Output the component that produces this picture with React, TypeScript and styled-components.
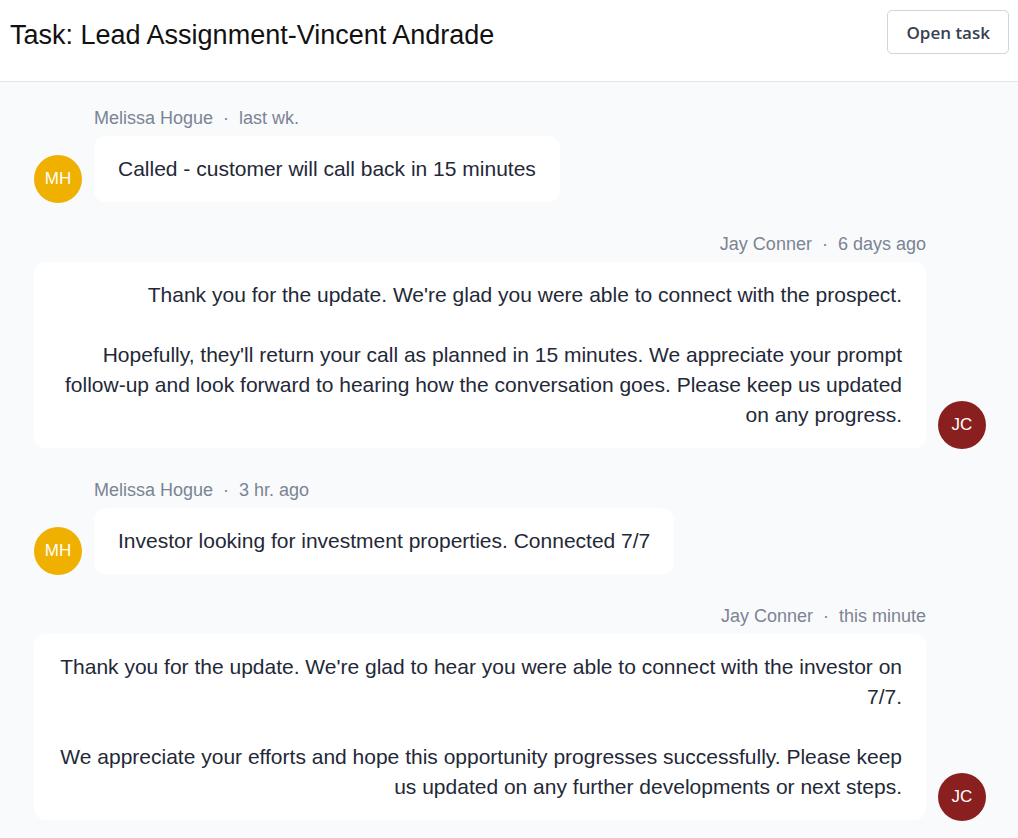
import React from "react";
import styled, { createGlobalStyle } from "styled-components";

const GlobalStyle = createGlobalStyle`
  html, body {
    margin: 0;
    padding: 0;
    background: #f9fafb;
  }
  body {
    font-family: "Liberation Sans", Arial, sans-serif;
  }
  * { box-sizing: border-box; }
`;

const Page = styled.div`
  width: 1018px;
  min-height: 838px;
  background: #f9fafb;
`;

const Header = styled.header`
  display: flex;
  align-items: flex-start;
  justify-content: space-between;
  height: 82px;
  padding: 10px 9px 0 10px;
  background: #ffffff;
  border-bottom: 1px solid #e5e7eb;
`;

const Title = styled.h1`
  margin: 10px 0 0;
  font-family: "Liberation Sans", Arial, sans-serif;
  font-size: 27px;
  line-height: 31px;
  font-weight: 400;
  color: #111111;
`;

const OpenButton = styled.button`
  height: 44px;
  padding: 0 18px;
  background: #ffffff;
  border: 1px solid #d1d5db;
  border-radius: 5px;
  font-family: "Open Sans", sans-serif;
  font-size: 17px;
  font-weight: 600;
  color: #374151;
  cursor: pointer;
`;

const Thread = styled.main`
  display: flex;
  flex-direction: column;
  gap: 30px;
  padding: 24px 32px 24px 34px;
`;

const Message = styled.section<{ $mine: boolean }>`
  display: flex;
  flex-direction: column;
  align-items: ${(p) => (p.$mine ? "flex-end" : "flex-start")};
  gap: 6px;
`;

const Meta = styled.div<{ $mine: boolean }>`
  font-size: 18px;
  line-height: 24px;
  color: #7b8494;
  margin-left: ${(p) => (p.$mine ? "0" : "60px")};
  margin-right: ${(p) => (p.$mine ? "60px" : "0")};
`;

const Dot = styled.span`
  margin: 0 10px;
`;

const Row = styled.div<{ $mine: boolean }>`
  display: flex;
  flex-direction: ${(p) => (p.$mine ? "row-reverse" : "row")};
  align-items: flex-end;
  gap: 12px;
  width: 100%;
  justify-content: flex-start;
`;

const Avatar = styled.div<{ $color: string }>`
  flex: 0 0 48px;
  width: 48px;
  height: 48px;
  border-radius: 50%;
  background: ${(p) => p.$color};
  color: #ffffff;
  display: flex;
  align-items: center;
  justify-content: center;
  font-size: 17px;
  margin-bottom: -1px;
`;

const Bubble = styled.div<{ $mine: boolean }>`
  flex: 0 1 auto;
  background: #ffffff;
  border-radius: 12px;
  padding: 18px 24px;
  font-size: 21px;
  line-height: 30px;
  color: #1f2937;
  text-align: ${(p) => (p.$mine ? "right" : "left")};
  white-space: pre-wrap;
`;

type Entry = {
  author: string;
  initials: string;
  when: string;
  mine: boolean;
  text: string;
};

const entries: Entry[] = [
  {
    author: "Melissa Hogue",
    initials: "MH",
    when: "last wk.",
    mine: false,
    text: "Called - customer will call back in 15 minutes",
  },
  {
    author: "Jay Conner",
    initials: "JC",
    when: "6 days ago",
    mine: true,
    text:
      "Thank you for the update. We're glad you were able to connect with the prospect.\n\nHopefully, they'll return your call as planned in 15 minutes. We appreciate your prompt follow-up and look forward to hearing how the conversation goes. Please keep us updated on any progress.",
  },
  {
    author: "Melissa Hogue",
    initials: "MH",
    when: "3 hr. ago",
    mine: false,
    text: "Investor looking for investment properties. Connected 7/7",
  },
  {
    author: "Jay Conner",
    initials: "JC",
    when: "this minute",
    mine: true,
    text:
      "Thank you for the update. We're glad to hear you were able to connect with the investor on 7/7.\n\nWe appreciate your efforts and hope this opportunity progresses successfully. Please keep us updated on any further developments or next steps.",
  },
];

const avatarColor = (initials: string) =>
  initials === "MH" ? "#efb000" : "#8a1f1f";

export default function App() {
  return (
    <Page>
      <GlobalStyle />
      <Header>
        <Title>Task: Lead Assignment-Vincent Andrade</Title>
        <OpenButton>Open task</OpenButton>
      </Header>
      <Thread>
        {entries.map((e, i) => (
          <Message key={i} $mine={e.mine}>
            <Meta $mine={e.mine}>
              {e.author}
              <Dot>·</Dot>
              {e.when}
            </Meta>
            <Row $mine={e.mine}>
              <Avatar $color={avatarColor(e.initials)}>{e.initials}</Avatar>
              <Bubble $mine={e.mine}>{e.text}</Bubble>
            </Row>
          </Message>
        ))}
      </Thread>
    </Page>
  );
}
